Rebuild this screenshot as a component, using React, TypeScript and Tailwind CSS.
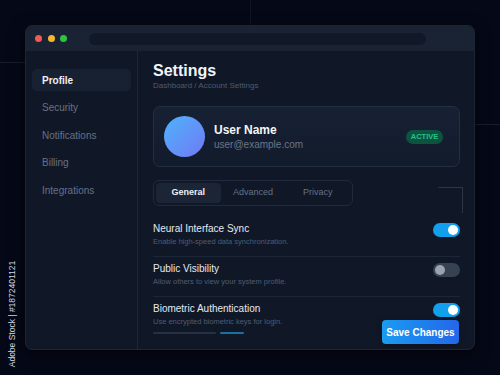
import React from "react";

function Toggle({ on }: { on: boolean }) {
  return on ? (
    <div className="w-[27px] h-[14px] rounded-full bg-[#12a0ec] flex items-center justify-end pr-[2px] shrink-0">
      <div className="w-[10px] h-[10px] rounded-full bg-white" />
    </div>
  ) : (
    <div className="w-[27px] h-[14px] rounded-full bg-[#364152] flex items-center justify-start pl-[2px] shrink-0">
      <div className="w-[10px] h-[10px] rounded-full bg-[#9aa3b2]" />
    </div>
  );
}

function Row({
  title,
  desc,
  on,
  last,
  children,
}: {
  title: string;
  desc: string;
  on: boolean;
  last?: boolean;
  children?: React.ReactNode;
}) {
  return (
    <div className={`h-[40px] pt-[6px] flex items-start justify-between ${last ? "" : "border-b border-[#1c2637]"}`}>
      <div className="flex flex-col">
        <div className="text-[10px] leading-[12px] text-[#e5e9f0]">{title}</div>
        <div className="text-[7.5px] leading-[10px] mt-[2px] text-[#4f5c70]">{desc}</div>
        {children}
      </div>
      <Toggle on={on} />
    </div>
  );
}

export default function App() {
  const font = { fontFamily: '"Liberation Sans", Arial, sans-serif' };
  return (
    <div className="relative w-[500px] h-[375px] bg-[#050817] overflow-hidden pt-[25px] pl-[25px]" style={font}>
      {/* background grid lines */}
      <div className="absolute left-0 top-[62px] w-[25px] h-px bg-[#161e2d]" />
      <div className="absolute right-0 top-[124px] w-[25px] h-px bg-[#161e2d]" />
      <div className="absolute left-[250px] top-0 w-px h-[25px] bg-[#0f1523]" />

      {/* vertical watermark text */}
      <div className="absolute left-[12px] top-[314px] -translate-x-1/2 -translate-y-1/2 -rotate-90 whitespace-nowrap text-[8.5px] text-[#d8dbe2]">
        Adobe Stock | #1872401121
      </div>

      <div className="relative w-[450px] h-[325px] rounded-[7px] bg-[#101828] flex flex-col overflow-hidden shadow-[0_4px_16px_rgba(0,0,0,0.6)] border border-[#1b2536]">
        {/* title bar */}
        <div className="h-[25px] bg-[#1a2334] flex items-center pl-[9px] shrink-0">
          <div className="flex gap-[5.5px]">
            <div className="w-[7px] h-[7px] rounded-full bg-[#ef5a57]" />
            <div className="w-[7px] h-[7px] rounded-full bg-[#f5b52e]" />
            <div className="w-[7px] h-[7px] rounded-full bg-[#2cc540]" />
          </div>
          <div className="ml-[22px] w-[337px] h-[12px] rounded-full bg-[#111827]" />
        </div>

        <div className="flex flex-1">
          {/* sidebar */}
          <div className="w-[112px] border-r border-[#1d2738] pt-[18px] px-[6px] flex flex-col gap-[5.5px]">
            <div className="h-[22px] rounded-[5px] bg-[#182131] flex items-center pl-[10px] text-[10px] font-bold text-[#eef1f5]">
              Profile
            </div>
            {["Security", "Notifications", "Billing", "Integrations"].map((t) => (
              <div key={t} className="h-[22px] flex items-center pl-[10px] text-[10px] text-[#667186]">
                {t}
              </div>
            ))}
          </div>

          {/* main */}
          <div className="relative flex-1 pl-[15px] pr-[14px] pt-[10px]">
            <div className="text-[16px] leading-[20px] font-bold text-[#f1f4f8]">Settings</div>
            <div className="text-[8px] leading-[10px] text-[#4e5b6f]">Dashboard / Account Settings</div>

            {/* user card */}
            <div className="mt-[15px] h-[61px] rounded-[7px] border border-[#232e41] bg-gradient-to-b from-[#172134] to-[#121b2b] flex items-center pl-[10px] pr-[16px]">
              <div className="w-[41px] h-[41px] rounded-full bg-gradient-to-br from-[#48b3fb] to-[#6e78f4]" />
              <div className="ml-[9px] flex flex-col flex-1">
                <div className="text-[12px] leading-[14px] font-bold text-[#f3f5f8]">User Name</div>
                <div className="text-[10px] leading-[13px] mt-[1px] text-[#6c7588]">user@example.com</div>
              </div>
              <div className="w-[37px] h-[14px] rounded-full bg-[#0c5440] flex items-center justify-center text-[7.5px] font-bold text-[#23c28a]">
                ACTIVE
              </div>
            </div>

            {/* tabs */}
            <div className="mt-[13px] w-[200px] h-[26px] rounded-[6px] border border-[#202a3c] p-[2px] flex">
              <div className="w-[65px] rounded-[4px] bg-[#1c2535] flex items-center justify-center text-[9px] font-bold text-[#eef1f5]">
                General
              </div>
              <div className="w-[65px] flex items-center justify-center text-[9px] text-[#667186]">Advanced</div>
              <div className="w-[65px] flex items-center justify-center text-[9px] text-[#667186]">Privacy</div>
            </div>

            {/* decorative corner */}
            <div className="absolute left-[300px] top-[136px] w-[25px] h-[26px] border-t border-r border-[#2a3548]" />

            {/* rows */}
            <div className="mt-[11px] flex flex-col">
              <Row title="Neural Interface Sync" desc="Enable high-speed data synchronization." on />
              <Row title="Public Visibility" desc="Allow others to view your system profile." on={false} />
              <Row title="Biometric Authentication" desc="Use encrypted biometric keys for login." on last>
                <div className="flex gap-[4px] mt-[5px]">
                  <div className="w-[63px] h-[2px] rounded-full bg-[#263142]" />
                  <div className="w-[24px] h-[2px] rounded-full bg-[#1a6fa6]" />
                </div>
              </Row>
            </div>

            <div className="absolute right-[15px] top-[269px] w-[77px] h-[24px] rounded-[4px] bg-gradient-to-r from-[#1a9bf0] to-[#2466ea] flex items-center justify-center text-[10px] font-bold text-white shadow-[0_2px_6px_rgba(0,0,0,0.4)]">
              Save Changes
            </div>
          </div>
        </div>
      </div>
    </div>
  );
}
